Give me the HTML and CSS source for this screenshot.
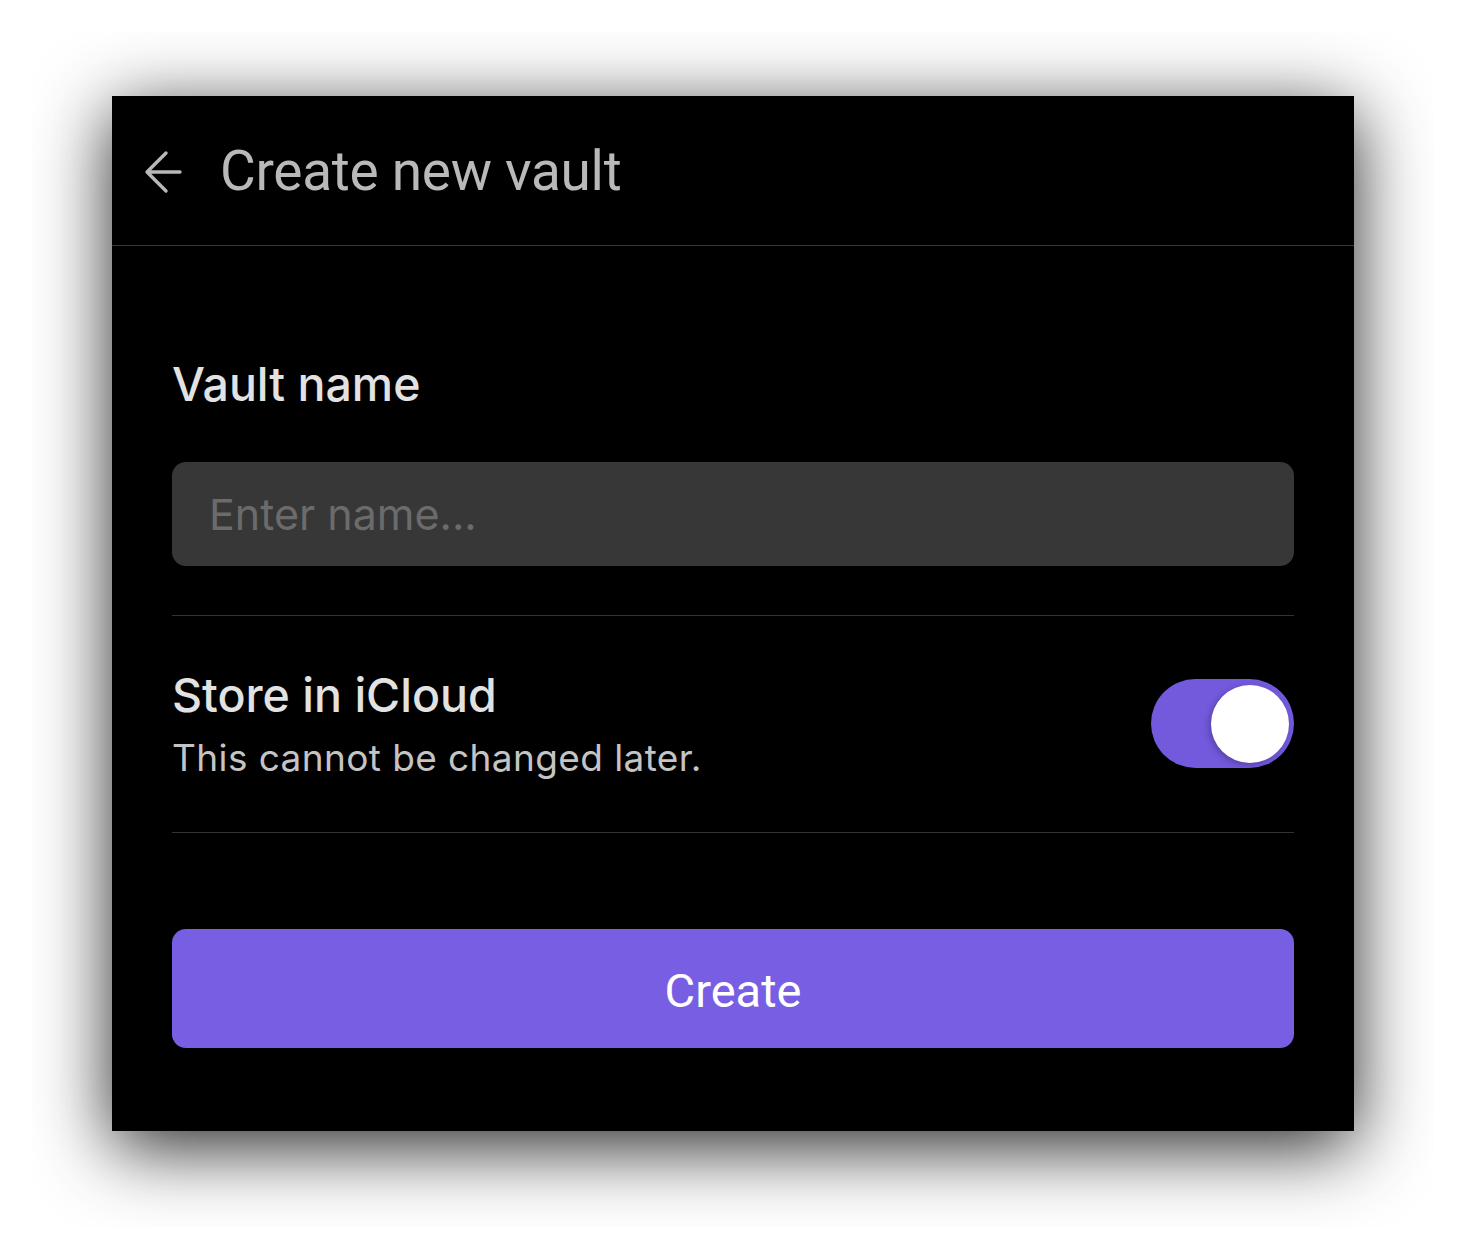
FILE: index.html
```html
<!DOCTYPE html>
<html>
<head>
<meta charset="utf-8">
<link rel="stylesheet" href="styles.css">
</head>
<body>
<div class="stage">
  <div class="clip">
    <div class="card">
      <header class="header">
        <svg class="back" width="40" height="44" viewBox="0 0 40 44">
          <path d="M37 22 H4 M23 3 L4 22 L23 41" fill="none" stroke="#b8b8b8" stroke-width="3.4" stroke-linecap="round" stroke-linejoin="round"/>
        </svg>
        <h1 class="title">Create new vault</h1>
      </header>
      <main class="content">
        <div class="label">Vault name</div>
        <div class="input"><span class="placeholder">Enter name...</span></div>
        <div class="row">
          <div class="row-text">
            <div class="row-title">Store in iCloud</div>
            <div class="row-sub">This cannot be changed later.</div>
          </div>
          <div class="toggle"><div class="knob"></div></div>
        </div>
        <button class="create">Create</button>
      </main>
    </div>
  </div>
</div>
</body>
</html>
```
FILE: styles.css
```css
html, body {
  margin: 0;
  padding: 0;
  background: #ffffff;
}
.stage {
  padding: 32px;
}
.clip {
  width: 1402px;
  height: 1195px;
  overflow: hidden;
  box-sizing: border-box;
  padding: 64px 80px 0 80px;
}
.card {
  width: 1242px;
  height: 1035px;
  background: #000;
  box-shadow: 0 16px 70px rgba(0, 0, 0, 0.85);
  display: flex;
  flex-direction: column;
}
.header {
  height: 149px;
  border-bottom: 1px solid #383838;
  display: flex;
  align-items: center;
  padding-left: 31px;
  flex-shrink: 0;
}
.back {
  display: block;
  margin-top: 2px;
}
.title {
  margin: 2px 0 0 37px;
  font-family: Roboto, "Liberation Sans", sans-serif;
  font-weight: 400;
  font-size: 55px;
  letter-spacing: -0.3px;
  color: #b9b9b9;
  line-height: 1;
}
.content {
  padding: 0 60px;
  display: flex;
  flex-direction: column;
  font-family: Inter, "Noto Sans", sans-serif;
}
.label {
  margin-top: 110px;
  font-size: 46.5px;
  line-height: 56px;
  color: #e2e2e2;
  font-weight: 450;
}
.input {
  margin-top: 50px;
  margin-bottom: 49px;
  height: 104px;
  border-radius: 14px;
  background: #373737;
  display: flex;
  align-items: center;
  padding-left: 37px;
}
.placeholder {
  font-size: 43px;
  color: #6b6b6b;
}
.row {
  border-top: 1px solid #333;
  border-bottom: 1px solid #333;
  padding: 51px 0 52px 0;
  display: flex;
  align-items: center;
  justify-content: space-between;
}
.row-title {
  font-size: 46.5px;
  line-height: 56px;
  color: #e2e2e2;
  font-weight: 450;
}
.row-sub {
  margin-top: 13px;
  font-size: 37px;
  line-height: 44px;
  color: #c4c4c4;
  letter-spacing: 0.4px;
}
.toggle {
  width: 143px;
  height: 89px;
  border-radius: 45px;
  background: #7359dc;
  position: relative;
  flex-shrink: 0;
}
.knob {
  position: absolute;
  right: 5px;
  top: 6px;
  width: 78px;
  height: 78px;
  border-radius: 50%;
  background: #fff;
  box-shadow: -2px 2px 6px rgba(0, 0, 0, 0.25);
}
.create {
  margin-top: 96px;
  height: 119px;
  border: none;
  border-radius: 14px;
  background: #785ee3;
  color: #fff;
  font-family: Roboto, "Liberation Sans", sans-serif;
  font-size: 47px;
  padding: 0;
  padding-top: 3px;
}
```
